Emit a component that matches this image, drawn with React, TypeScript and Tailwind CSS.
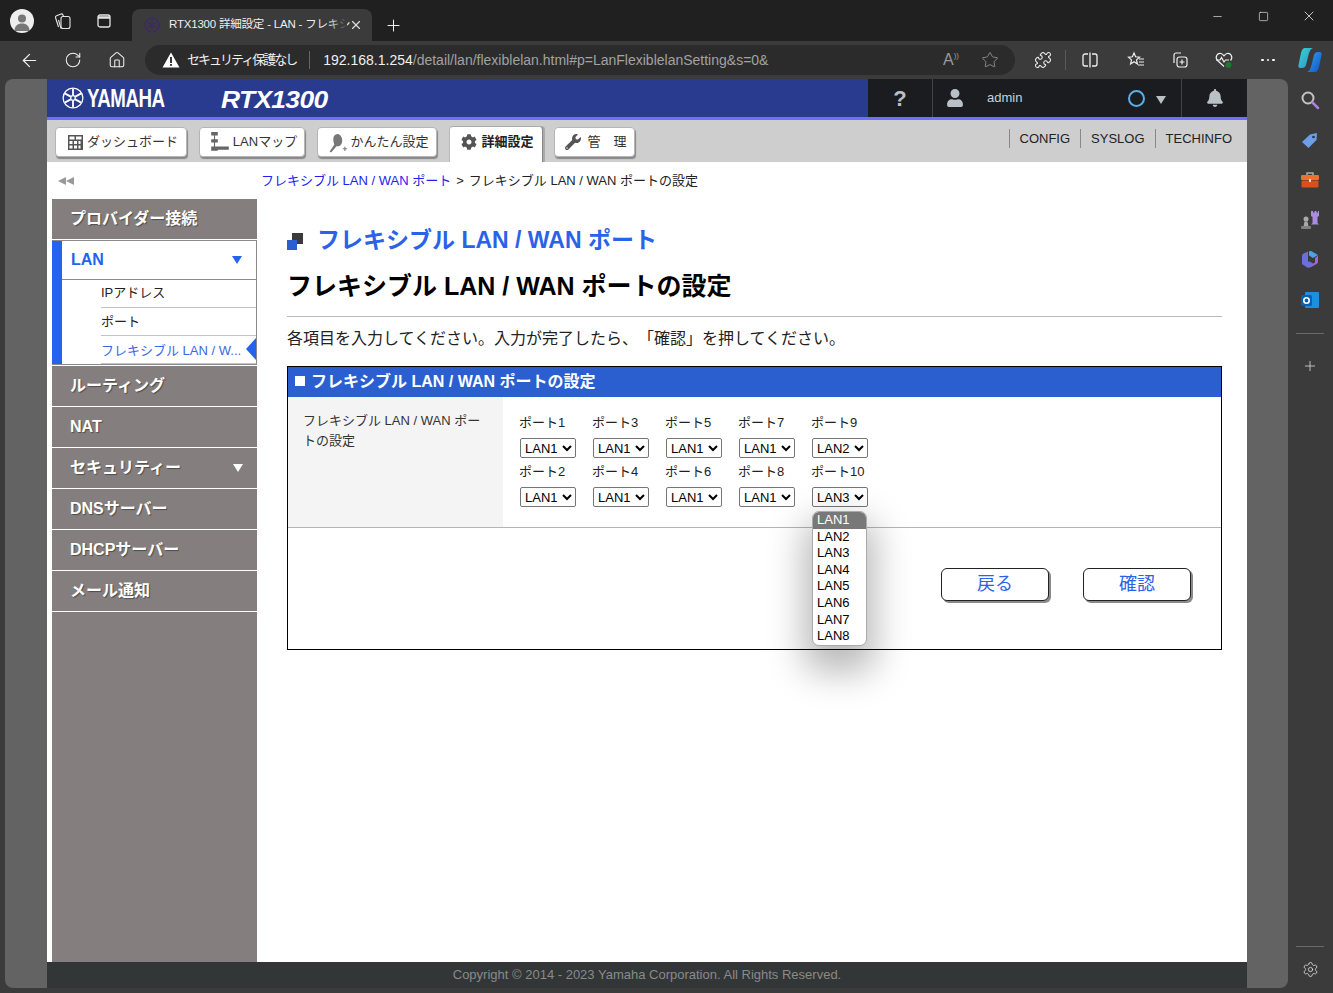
import React from "react";
import { ArrowLeft, RotateCw, Home, X, Plus, Minus, Square, Star, Puzzle, Settings } from "lucide-react";
import { FaCog, FaWrench, FaBell, FaUser } from "react-icons/fa";

const FONT = "font-['Liberation_Sans','Noto_Sans_CJK_JP',sans-serif]";

function YamahaMark() {
  return (
    <svg width="22" height="22" viewBox="0 0 24 24" fill="none" stroke="#fff" strokeWidth="1.4">
      <circle cx="12" cy="12" r="10.8" />
      <circle cx="12" cy="12" r="2.500" />
      <path d="M12 2v7M12 15v7M3 7l6.500 3.500M14.500 13.500L21 17M3 17l6.500-3.500M14.500 10.500L21 7" strokeWidth="2" />
    </svg>
  );
}

function ToolIcon({ children, w = 44 }: { children: React.ReactNode; w?: number }) {
  return (
    <div className="flex shrink-0 items-center justify-center text-[#f0f0f0]" style={{ width: w }}>
      {children}
    </div>
  );
}

function NavBtn({ icon, label, active, w }: { icon: React.ReactNode; label: string; active?: boolean; w: number }) {
  return active ? (
    <div
      className="flex h-[36px] items-center justify-center gap-[4px] self-end rounded-t-[4px] border-t border-x border-t-[#aaa] border-l-[#bbb] border-r-[#888] bg-white pb-[6px] pl-[3px] text-[13px] font-bold text-[#222] shadow-[2px_0_0_#aaa]"
      style={{ width: w }}
    >
      {icon}
      {label}
    </div>
  ) : (
    <div
      className="mb-[5px] flex h-[30px] items-center justify-center gap-[3px] rounded-[4px] border border-[#b5b5b5] bg-white pl-[3px] text-[13px] text-[#333] shadow-[1px_2px_1px_#888]"
      style={{ width: w }}
    >
      {icon}
      <span>{label}</span>
    </div>
  );
}

function SideItem({ label, arrow }: { label: string; arrow?: boolean }) {
  return (
    <div className="mb-[1px] flex h-[40px] items-center justify-between bg-[#847f7e] pl-[18px] pr-[14px] text-[16px] font-bold text-white [text-shadow:1px_1px_1px_rgba(0,0,0,0.4)]">
      <span>{label}</span>
      {arrow && <span className="h-0 w-0 border-x-[5px] border-t-[8px] border-x-transparent border-t-white" />}
    </div>
  );
}

function PortCell({ n, value }: { n: number; value: string }) {
  return (
    <div className="flex h-[49px] w-[73px] flex-col">
      <div className="flex h-[24px] items-center text-[13px] text-[#222]">ポート{n}</div>
      <div className="flex h-[25px] items-start pl-[1px] pt-[3px]">
        <select
          defaultValue={value}
          className={`h-[20px] w-[56px] rounded-[2px] border border-[#767676] bg-white text-[13px] text-black ${FONT}`}
        >
          {["LAN1", "LAN2", "LAN3", "LAN4", "LAN5", "LAN6", "LAN7", "LAN8"].map((o) => (
            <option key={o}>{o}</option>
          ))}
        </select>
      </div>
    </div>
  );
}

function ActionBtn({ label }: { label: string }) {
  return (
    <div className="flex h-[33px] w-[108px] items-center justify-center rounded-[6px] border border-[#222] bg-white text-[18px] text-[#2a62e8] shadow-[2px_2px_0_#8a8a8a]">
      {label}
    </div>
  );
}

export default function App() {
  return (
    <div className={`flex h-[993px] w-[1333px] flex-col overflow-hidden bg-[#3b3b3b] [text-spacing-trim:space-all] ${FONT}`}>
      {/* title bar */}
      <div className="flex h-[41px] shrink-0 items-end bg-[#202020]">
        <div className="flex h-[41px] w-[132px] shrink-0 items-center">
          <div className="ml-[10px] flex h-[24px] w-[24px] items-center justify-center overflow-hidden rounded-full bg-[#eee]">
            <svg width="24" height="24" viewBox="0 0 24 24" fill="#777">
              <circle cx="12" cy="9.500" r="4" />
              <path d="M4.500 22c0-5 3-7.500 7.500-7.500s7.500 2.500 7.500 7.500z" />
            </svg>
          </div>
          <div className="ml-[19px] text-[#e4e4e4]">
            <svg width="20" height="20" viewBox="0 0 20 20" fill="none" stroke="currentColor" strokeWidth="1.100">
              <rect x="8" y="5.500" width="9" height="12" rx="2" />
              <path d="M5.500 16L2.500 6.500c-.2-1 .2-1.500 1-1.800L8 3c1-.3 1.500 0 2 1l.5 1.500M8 17.500L5.500 9" />
            </svg>
          </div>
          <div className="ml-[23px] text-[#e4e4e4]">
            <svg width="16" height="16" viewBox="0 0 16 16" fill="none" stroke="currentColor" strokeWidth="1.300">
              <rect x="2" y="2" width="12" height="12" rx="2" />
              <path d="M2 4.500h12" strokeWidth="2.500" />
            </svg>
          </div>
        </div>
        <div className="flex h-[32px] w-[240px] shrink-0 items-center rounded-t-[8px] bg-[#3b3b3b] pl-[12px] pr-[9px]">
          <svg width="16" height="16" viewBox="0 0 16 16" fill="none" stroke="#3d2a66" strokeWidth="1.400">
            <circle cx="8" cy="8" r="7" />
            <path d="M8 3v10M3.500 5.500l9 5M3.500 10.500l9-5" />
          </svg>
          <div className="relative ml-[9px] w-[178px] shrink-0 whitespace-nowrap text-[11.500px] tracking-[-0.2px] text-[#eee]">
            RTX1300 詳細設定 - LAN - フレキシ
            <div className="absolute inset-y-0 right-0 w-[18px] bg-gradient-to-r from-transparent to-[#3b3b3b]" />
          </div>
          <div className="flex flex-1 justify-end"><X size={14} className="shrink-0 text-[#ddd]" /></div>
        </div>
        <div className="flex h-[32px] w-[42px] items-center justify-center text-[#f0f0f0]">
          <Plus size={19} strokeWidth={1.300} />
        </div>
        <div className="flex-1" />
        <div className="flex h-[41px] items-start pt-[9px] text-[#f0f0f0]">
          <div className="flex h-[14px] w-[46px] items-center justify-center"><Minus size={13} strokeWidth={1.200} /></div>
          <div className="flex h-[14px] w-[46px] items-center justify-center"><Square size={11} strokeWidth={1.400} /></div>
          <div className="flex h-[14px] w-[47px] items-center justify-center pr-[2px]"><X size={16} strokeWidth={1.200} /></div>
        </div>
      </div>

      {/* toolbar */}
      <div className="flex h-[38px] shrink-0 items-center">
        <div className="flex w-[145px] shrink-0 items-center pl-[7px]">
          <ToolIcon><ArrowLeft size={21} strokeWidth={1.400} /></ToolIcon>
          <ToolIcon><RotateCw size={18} strokeWidth={1.400} /></ToolIcon>
          <ToolIcon><Home size={18} strokeWidth={1.400} /></ToolIcon>
        </div>
        <div className="flex h-[30px] w-[870px] shrink-0 items-center rounded-full bg-[#2b2b2b] pl-[17px] text-[14px]">
          <svg width="18" height="16" viewBox="0 0 18 16">
            <path d="M9 .5L17.500 15.500H.5z" fill="#fff" />
            <rect x="8.100" y="5" width="1.800" height="6" fill="#222" />
            <rect x="8.100" y="12" width="1.800" height="1.800" fill="#222" />
          </svg>
          <span className="ml-[7px] whitespace-nowrap text-[13px] tracking-[-2px] text-[#f0f0f0]">セキュリティ保護なし</span>
          <span className="ml-[13px] h-[18px] w-px bg-[#666]" />
          <span className="ml-[13px] whitespace-nowrap text-[#f0f0f0]">192.168.1.254</span>
          <span className="whitespace-nowrap text-[#a2a2a2]">/detail/lan/flexiblelan.html#p=LanFlexiblelanSetting&amp;s=0&amp;</span>
          <div className="flex-1" />
          <span className="mr-[22px] flex items-start text-[16px] leading-none text-[#999]">A<span className="text-[8px]">))</span></span>
          <Star size={18} strokeWidth={1.100} className="mr-[16px] text-[#999]" />
        </div>
        <div className="ml-[6px] flex items-center">
          <ToolIcon><Puzzle size={18} strokeWidth={1.400} /></ToolIcon>
          <span className="h-[20px] w-px bg-[#5a5a5a]" />
          <ToolIcon w={48}>
            <svg width="18" height="18" viewBox="0 0 18 18" fill="none" stroke="currentColor" strokeWidth="1.300">
              <path d="M7 3H4a2 2 0 0 0-2 2v8a2 2 0 0 0 2 2h3M11 3h3a2 2 0 0 1 2 2v8a2 2 0 0 1-2 2h-3M9 1.500v15" />
            </svg>
          </ToolIcon>
          <ToolIcon w={44}>
            <svg width="18" height="18" viewBox="0 0 18 18" fill="none" stroke="currentColor" strokeWidth="1.200">
              <path d="M7 2l1.600 3.800 3.900.4-3 2.700.9 4-3.400-2.100-3.400 2.100.9-4-3-2.700 3.900-.4zM12 8h5M12 11h5M11 14h6" />
            </svg>
          </ToolIcon>
          <ToolIcon w={44}>
            <svg width="18" height="18" viewBox="0 0 18 18" fill="none" stroke="currentColor" strokeWidth="1.200">
              <path d="M3 12V4a2 2 0 0 1 2-2h5" />
              <rect x="6" y="6" width="10" height="10" rx="2.500" />
              <path d="M11 8.500v5M8.500 11h5" />
            </svg>
          </ToolIcon>
          <ToolIcon w={44}>
            <svg width="20" height="18" viewBox="0 0 20 18" fill="none" stroke="currentColor" strokeWidth="1.200">
              <path d="M10 15.500L3.500 9.500C.5 6 3.500 1.500 7 2.500c1.500.4 2.300 1.300 3 2.300.7-1 1.500-1.900 3-2.300 3.500-1 6.500 3.500 3.500 7" />
              <path d="M2 9h4l1.500-2.500L10 11l1.500-2H15" />
              <circle cx="14.500" cy="14" r="3" fill="#1a7a2e" stroke="none" />
            </svg>
          </ToolIcon>
          <ToolIcon w={44}>
            <span className="flex gap-[3px]">
              <span className="h-[2.500px] w-[2.500px] rounded-full bg-white" />
              <span className="h-[2.500px] w-[2.500px] rounded-full bg-white" />
              <span className="h-[2.500px] w-[2.500px] rounded-full bg-white" />
            </span>
          </ToolIcon>
          <ToolIcon w={40}>
            <svg width="24" height="26" viewBox="0 0 24 26">
              <defs>
                <linearGradient id="cp1" x1="0" y1="0" x2="1" y2="1">
                  <stop offset="0" stopColor="#38d6c8" />
                  <stop offset="1" stopColor="#2a8fd8" />
                </linearGradient>
                <linearGradient id="cp2" x1="0" y1="0" x2="1" y2="1">
                  <stop offset="0" stopColor="#2ba6f0" />
                  <stop offset="1" stopColor="#1551c8" />
                </linearGradient>
              </defs>
              <path d="M7 1h8c-3 1-4 5-5 9l-2 8c-.5 2-2 3-4 3H2c-1 0-2-1-1.500-3L3 6c.7-3 2-5 4-5z" fill="url(#cp1)" />
              <path d="M17 25H9c3-1 4-5 5-9l2-8c.5-2 2-3 4-3h2c1 0 2 1 1.500 3L21 20c-.7 3-2 5-4 5z" fill="url(#cp2)" />
            </svg>
          </ToolIcon>
        </div>
      </div>

      {/* main area */}
      <div className="flex min-h-0 flex-1">
        <div className="mb-[5px] ml-[5px] flex w-[1283px] shrink-0 overflow-hidden rounded-[8px] bg-[#636363] pl-[42px] pr-[41px]">
          <div className="flex w-[1200px] flex-col bg-white">
            {/* header */}
            <div className="flex h-[38px] shrink-0">
              <div className="flex w-[821px] items-center bg-[#283b8e] pl-[15px] text-white">
                <YamahaMark />
                <span className="ml-[3px] w-[78px] origin-left scale-x-[0.72] whitespace-nowrap text-[26px] font-bold tracking-tight">YAMAHA</span>
                <span className="ml-[56px] mt-[3px] origin-left scale-x-[1.1] text-[24px] font-bold italic tracking-tight">RTX1300</span>
              </div>
              <div className="flex flex-1 items-center bg-[#1b1c1f] text-[#b9c0c6]">
                <div className="flex h-full w-[65px] items-center justify-center border-r border-[#444] text-[22px] font-bold">?</div>
                <div className="flex w-[44px] justify-center"><FaUser size={18} /></div>
                <span className="ml-[10px] text-[13px] text-[#c4d2de]">admin</span>
                <div className="ml-[106px] h-[17px] w-[17px] rounded-full border-2 border-[#5aaee8]" />
                <span className="ml-[11px] mt-[3px] h-0 w-0 border-x-[5px] border-t-[8px] border-x-transparent border-t-[#b9c0c6]" />
                <div className="ml-[15px] flex h-full flex-1 items-center justify-center border-l border-[#444]"><FaBell size={18} /></div>
              </div>
            </div>
            <div className="h-[3px] shrink-0 bg-[#6f6fff]" />
            {/* nav */}
            <div className="flex h-[42px] shrink-0 items-end bg-[#cecece] pl-[8px]">
              <div className="flex items-end gap-[12px]">
                <NavBtn
                  w={132}
                  label="ダッシュボード"
                  icon={
                    <svg width="17" height="17" viewBox="0 0 17 17" fill="#555">
                      <path d="M1 1h15v15H1zm1.500 1.500v3h5v-3zm6.500 0v3h5.500v-3zm-6.500 4.500v3h3v-3zm4.500 0v3h3v-3zm4.500 0v3h2v-3zm-9 4.500v3h3v-3zm4.500 0v3h3v-3zm4.500 0v3h2v-3z" fillRule="evenodd" />
                    </svg>
                  }
                />
                <NavBtn
                  w={106}
                  label="LANマップ"
                  icon={
                    <svg width="20" height="22" viewBox="0 0 18 20" fill="#666">
                      <path d="M1 1h6v3H1zM3.500 4h1v13h-1zM4 9h3v1H4zM1 7.500h6v3H1zM1 14h6v4H1zM7 14h10v3H7z" />
                    </svg>
                  }
                />
                <NavBtn
                  w={120}
                  label="かんたん設定"
                  icon={
                    <svg width="19" height="21" viewBox="0 0 18 20" fill="#777">
                      <path d="M6 12L1.500 18.500l1.500 1L8 13.500c3 .5 5.500-1.500 5.500-5.500 0-3-2-6-4.500-6S5 4 5 7c0 2 .5 4 1 5z" />
                      <path d="M14 15.500h4v1h-4zM15.500 14h1v4h-1z" />
                    </svg>
                  }
                />
                <div className="-mr-[1px]">
                  <NavBtn active w={94} label="詳細設定" icon={<FaCog size={16} className="text-[#555]" />} />
                </div>
                <NavBtn w={81} label="管　理" icon={<FaWrench size={16} className="mr-[3px] text-[#555]" />} />
              </div>
              <div className="flex-1" />
              <div className="mb-[16px] mr-[15px] flex h-[15px] items-center text-[13px] text-[#222]">
                <span className="border-l border-[#888] pl-[10px] pr-[10px]">CONFIG</span>
                <span className="border-l border-[#888] pl-[10px] pr-[10px]">SYSLOG</span>
                <span className="border-l border-[#888] pl-[10px]">TECHINFO</span>
              </div>
            </div>
            {/* breadcrumb */}
            <div className="flex h-[37px] shrink-0 items-center">
              <div className="w-[214px] pl-[11px]">
                <div className="flex">
                  <span className="h-0 w-0 border-y-[4px] border-r-[8px] border-y-transparent border-r-[#999]" />
                  <span className="h-0 w-0 border-y-[4px] border-r-[8px] border-y-transparent border-r-[#999]" />
                </div>
              </div>
              <div className="whitespace-nowrap text-[13px] text-[#222]">
                <span className="text-[#2222ee]">フレキシブル LAN / WAN ポート</span>
                <span className="mx-[5px]">&gt;</span>
                <span>フレキシブル LAN / WAN ポートの設定</span>
              </div>
            </div>
            {/* body */}
            <div className="flex min-h-0 flex-1">
              <div className="ml-[5px] flex w-[205px] shrink-0 flex-col bg-[#847f7e]">
                <div className="bg-white">
                  <SideItem label="プロバイダー接続" />
                </div>
                <div className="bg-white pb-[1px]">
                  <div className="flex border-y border-r border-l-0 border-[#8a8a8a]">
                    <div className="w-[10px] shrink-0 bg-[#2463eb]" />
                    <div className="min-w-0 flex-1">
                      <div className="flex h-[39px] items-center justify-between border-b border-[#8a8a8a] pl-[9px] pr-[14px] text-[16px] font-bold text-[#2463eb]">
                        <span>LAN</span>
                        <span className="h-0 w-0 border-x-[5px] border-t-[8px] border-x-transparent border-t-[#2463eb]" />
                      </div>
                      <div className="ml-[39px] flex h-[28px] items-center border-b border-[#c4c4c4] pb-[1px] text-[13px] text-[#222]">IPアドレス</div>
                      <div className="ml-[39px] flex h-[28px] items-center border-b border-[#c4c4c4] pt-[1px] text-[13px] text-[#222]">ポート</div>
                      <div className="relative ml-[39px] flex h-[28px] items-center border-b border-[#c4c4c4] pt-[2px] text-[13px] text-[#3a66e8]">
                        <span className="whitespace-nowrap">フレキシブル LAN / W...</span>
                        <span className="absolute right-0 top-[2px] h-0 w-0 border-y-[11px] border-r-[10px] border-y-transparent border-r-[#2463eb]" />
                      </div>
                    </div>
                  </div>
                </div>
                <div className="bg-white">
                  <SideItem label="ルーティング" />
                  <SideItem label="NAT" />
                  <SideItem label="セキュリティー" arrow />
                  <SideItem label="DNSサーバー" />
                  <SideItem label="DHCPサーバー" />
                  <SideItem label="メール通知" />
                </div>
                <div className="flex-1" />
              </div>
              <div className="min-w-0 flex-1 pl-[30px] pr-[25px]">
                <div className="mt-[21px] flex h-[40px] items-center">
                  <div className="relative mr-[14px] mt-[3px] h-[17px] w-[16px] shrink-0">
                    <span className="absolute right-0 top-0 h-[11px] w-[11px] bg-[#3b3b3b]" />
                    <span className="absolute bottom-0 left-0 h-[10px] w-[10px] bg-[#2b5fd0]" />
                  </div>
                  <span className="whitespace-nowrap text-[23px] font-bold text-[#2a62e8]">フレキシブル LAN / WAN ポート</span>
                </div>
                <div className="mt-[7px] flex h-[40px] items-center whitespace-nowrap text-[25px] font-bold text-black">フレキシブル LAN / WAN ポートの設定</div>
                <div className="mt-[9px] h-px bg-[#bbb]" />
                <div className="mt-[10px] flex h-[24px] items-center whitespace-nowrap text-[16px] text-[#222]">各項目を入力してください。入力が完了したら、「確認」を押してください。</div>
                <div className="mt-[15px] border border-black">
                  <div className="flex h-[30px] items-center bg-[#2b5fd0] pl-[7px] text-[16px] font-bold text-white">
                    <span className="mb-[3px] mr-[6px] h-[10px] w-[10px] bg-white" />
                    フレキシブル LAN / WAN ポートの設定
                  </div>
                  <div className="flex h-[131px] border-b border-[#b5b5b5]">
                    <div className="w-[215px] shrink-0 bg-[#f4f4f4] px-[15px] pt-[14px] text-[13px] leading-[20px] text-[#333]">
                      <div className="w-[180px]">フレキシブル LAN / WAN ポートの設定</div>
                    </div>
                    <div className="pl-[16px] pt-[14px]">
                      <div className="flex">
                        <div>
                          <PortCell n={1} value="LAN1" />
                          <PortCell n={2} value="LAN1" />
                        </div>
                        <div>
                          <PortCell n={3} value="LAN1" />
                          <PortCell n={4} value="LAN1" />
                        </div>
                        <div>
                          <PortCell n={5} value="LAN1" />
                          <PortCell n={6} value="LAN1" />
                        </div>
                        <div>
                          <PortCell n={7} value="LAN1" />
                          <PortCell n={8} value="LAN1" />
                        </div>
                        <div className="relative">
                          <PortCell n={9} value="LAN2" />
                          <PortCell n={10} value="LAN3" />
                          <div className="absolute left-[1px] top-[100px] z-10 w-[55px] overflow-hidden rounded-[7px] border border-[#aaa] bg-white text-[13px] leading-[16.600px] text-black shadow-[0_18px_36px_8px_rgba(0,0,0,0.28)]">
                            <div className="bg-[#787878] pl-[4px] text-white">LAN1</div>
                            {["LAN2", "LAN3", "LAN4", "LAN5", "LAN6", "LAN7", "LAN8"].map((o) => (
                              <div key={o} className="pl-[4px]">{o}</div>
                            ))}
                          </div>
                        </div>
                      </div>
                    </div>
                  </div>
                  <div className="flex h-[121px] items-start justify-end gap-[34px] pr-[30px] pt-[40px]">
                    <ActionBtn label="戻る" />
                    <ActionBtn label="確認" />
                  </div>
                </div>
              </div>
            </div>
            {/* footer */}
            <div className="flex h-[26px] shrink-0 items-center justify-center bg-[#323636] text-[13px] text-[#8a8a8a]">
              Copyright © 2014 - 2023 Yamaha Corporation. All Rights Reserved.
            </div>
          </div>
        </div>

        {/* right rail */}
        <div className="flex w-[45px] shrink-0 flex-col items-center pb-[15px] pr-[1px] pt-[1px]">
          <div className="flex h-[40px] items-center justify-center">
            <svg width="20" height="20" viewBox="0 0 20 20" fill="none">
              <circle cx="8" cy="8" r="5.500" stroke="#c4c4c4" strokeWidth="2" />
              <path d="M12.500 12.500L18 18" stroke="#b07fe0" strokeWidth="2.500" strokeLinecap="round" />
            </svg>
          </div>
          <div className="flex h-[40px] items-center justify-center pt-[1px]">
            <svg width="20" height="20" viewBox="0 0 20 20">
              <path d="M2 11L10 3.500l7-1.500-.5 7-8 8z" fill="#6c9fe8" />
              <circle cx="13.500" cy="6" r="1.300" fill="#234" />
            </svg>
          </div>
          <div className="flex h-[40px] items-center justify-center">
            <svg width="20" height="18" viewBox="0 0 20 18">
              <path d="M7 4V2h6v2" fill="none" stroke="#aaa" strokeWidth="1.500" />
              <rect x="1" y="4" width="18" height="5" rx="1" fill="#f07030" />
              <rect x="1.500" y="9.500" width="17" height="7" rx="1" fill="#d9501a" />
              <rect x="9" y="8" width="2" height="3" fill="#ddd" />
            </svg>
          </div>
          <div className="flex h-[40px] items-center justify-center">
            <svg width="20" height="20" viewBox="0 0 20 20">
              <path d="M11 1h2v1.500h1.500V1h2v1.500H18V1h1v5l-1.500 1v6l1.500 1.500H11l1.500-1.500V7L11 6z" fill="#a98be0" />
              <circle cx="6" cy="9" r="2.500" fill="#aaa" />
              <path d="M4.500 11.500h3l1 5h-5z" fill="#aaa" />
              <rect x="1" y="16" width="10" height="3" rx="1" fill="#808080" />
            </svg>
          </div>
          <div className="flex h-[40px] items-center justify-center">
            <svg width="20" height="20" viewBox="0 0 20 20">
              <path d="M9 1.500c1-.6 2-.6 3 0l6 3.500-5 3-4-2.500z" fill="#4aa5e0" />
              <path d="M18 5.500v6c0 1-.5 2-1.500 2.500L11 17c-1 .6-2 .6-3 0l7-4.500V8z" fill="#a066d8" />
              <path d="M2 6c0-1 .5-2 1.500-2.500L8 1.500v9l6 3.500-6 4-4.500-3C2.500 15 2 14 2 13z" fill="#6a6fe0" />
              <path d="M8 6.500l5 2.500-5 3z" fill="#3b3b3b" />
            </svg>
          </div>
          <div className="flex h-[40px] items-center justify-center">
            <svg width="20" height="20" viewBox="0 0 20 20">
              <rect x="5" y="2" width="14" height="16" rx="1" fill="#1d8fdc" />
              <rect x="1" y="5" width="11" height="11" rx="1.500" fill="#0c5fb0" />
              <circle cx="6.500" cy="10.500" r="2.700" fill="none" stroke="#fff" strokeWidth="1.600" />
            </svg>
          </div>
          <div className="mt-[13px] h-px w-[28px] bg-[#6a6a6a]" />
          <div className="mt-[24px] text-[#ddd]"><Plus size={16} strokeWidth={1.200} /></div>
          <div className="flex-1" />
          <div className="h-px w-[28px] bg-[#6a6a6a]" />
          <div className="mt-[14px] text-[#ddd]"><Settings size={17} strokeWidth={1.200} /></div>
        </div>
      </div>
    </div>
  );
}
